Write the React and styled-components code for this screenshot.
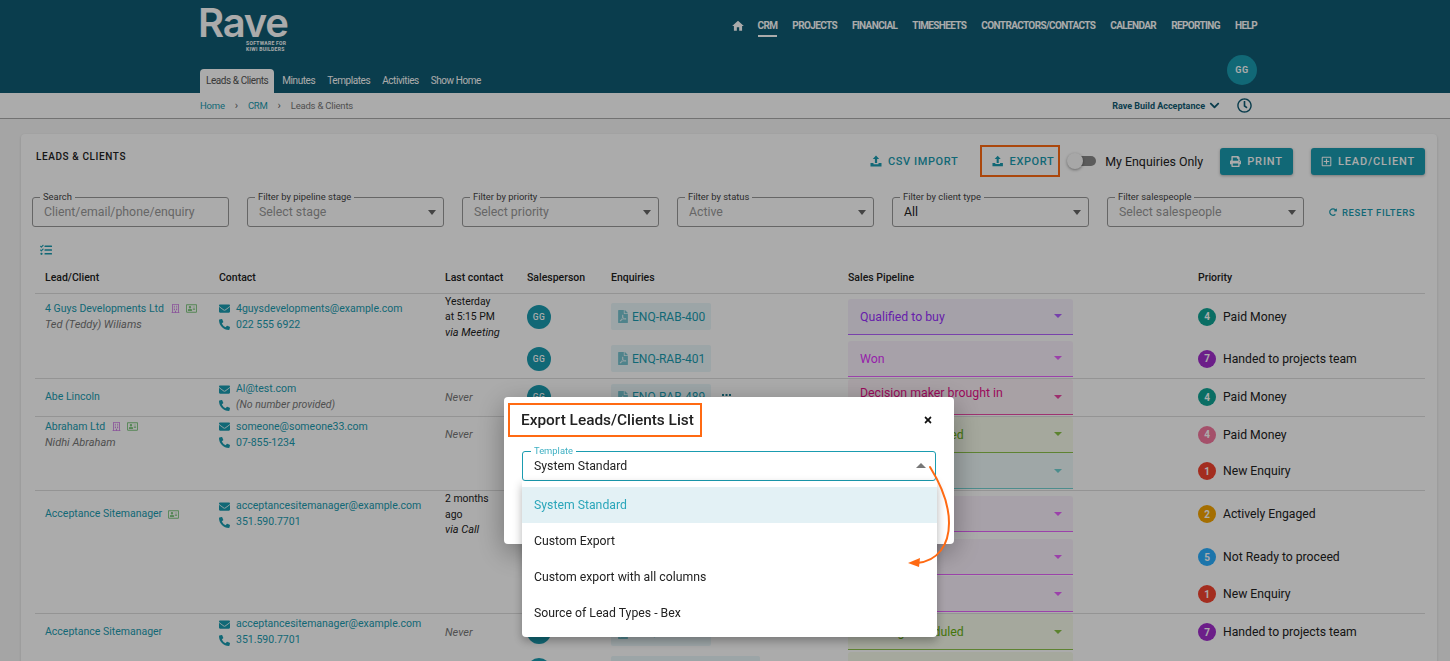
import React from "react";
import styled, { createGlobalStyle } from "styled-components";
import {
  FaChevronDown,
  FaEnvelope,
  FaFilePdf,
  FaPhoneAlt,
  FaPrint,
  FaRedoAlt,
  FaRegAddressCard,
  FaRegBuilding,
  FaRegClock,
  FaRegPlusSquare,
  FaTasks,
  FaTimes,
} from "react-icons/fa";
import { MdHome } from "react-icons/md";

const GlobalStyle = createGlobalStyle`
  html, body {
    margin: 0;
    height: 100%;
    overflow: hidden;
    background: #f7f7f7;
    font-family: Roboto, "Liberation Sans", sans-serif;
    font-size: 12px;
    color: #222;
  }
  * {
    box-sizing: border-box;
  }
`;

const TEAL = "#1a9cb0";

const navItems = ["CRM", "PROJECTS", "FINANCIAL", "TIMESHEETS", "CONTRACTORS/CONTACTS", "CALENDAR", "REPORTING", "HELP"];
const subItems = ["Leads & Clients", "Minutes", "Templates", "Activities", "Show Home"];
const filters = [
  { label: "Filter by pipeline stage", value: "Select stage" },
  { label: "Filter by priority", value: "Select priority" },
  { label: "Filter by status", value: "Active" },
  { label: "Filter by client type", value: "All", filled: true },
  { label: "Filter salespeople", value: "Select salespeople" },
];
const options = ["System Standard", "Custom Export", "Custom export with all columns", "Source of Lead Types - Bex"];

const stages = {
  qualified: { color: "#9a30ff", bg: "#f7f1fd" },
  won: { color: "#e030ff", bg: "#faf1fc" },
  decision: { color: "#e60f8a", bg: "#fbf0f6" },
  meeting: { color: "#66b010", bg: "#f6fbea" },
  fresh: { color: "#46c5c5", bg: "#eef9f9" },
};

const clients = [
  {
    name: "4 Guys Developments Ltd",
    person: "Ted (Teddy) Wiliams",
    building: true,
    card: true,
    email: "4guysdevelopments@example.com",
    phone: "022 555 6922",
    last: ["Yesterday", "at 5:15 PM"],
    via: "via Meeting",
    rows: [
      { enq: "ENQ-RAB-400", stage: "Qualified to buy", type: "qualified", n: 4, nc: "#10a495", pr: "Paid Money", h: 47 },
      { enq: "ENQ-RAB-401", stage: "Won", type: "won", n: 7, nc: "#a12dcd", pr: "Handed to projects team", h: 38 },
    ],
  },
  {
    name: "Abe Lincoln",
    email: "Al@test.com",
    noPhone: true,
    never: true,
    rows: [
      { enq: "ENQ-RAB-489", grip: true, stage: "Decision maker brought in", type: "decision", n: 4, nc: "#10a495", pr: "Paid Money", h: 38, top: true },
    ],
  },
  {
    name: "Abraham Ltd",
    person: "Nidhi Abraham",
    building: true,
    card: true,
    email: "someone@someone33.com",
    phone: "07-855-1234",
    never: true,
    rows: [
      { enq: "ENQ-RAB-402", stage: "Meeting scheduled", type: "meeting", n: 4, nc: "#f5789f", pr: "Paid Money", h: 37 },
      { enq: "ENQ-RAB-403", stage: "New", type: "fresh", n: 1, nc: "#f4432f", pr: "New Enquiry", h: 37 },
    ],
  },
  {
    name: "Acceptance Sitemanager",
    card: true,
    email: "acceptancesitemanager@example.com",
    phone: "351.590.7701",
    last: ["2 months", "ago"],
    via: "via Call",
    rows: [
      { enq: "ENQ-RAB-404", stage: "Won", type: "won", n: 2, nc: "#f5a400", pr: "Actively Engaged", h: 48 },
      { enq: "ENQ-RAB-405", stage: "Won", type: "won", n: 5, nc: "#2bafff", pr: "Not Ready to proceed", h: 38 },
      { enq: "ENQ-RAB-406", stage: "Won", type: "won", n: 1, nc: "#f4432f", pr: "New Enquiry", h: 37 },
    ],
  },
  {
    name: "Acceptance Sitemanager",
    email: "acceptancesitemanager@example.com",
    phone: "351.590.7701",
    never: true,
    rows: [
      { enq: "ENQ-RAB-407", stage: "Meeting scheduled", type: "meeting", n: 7, nc: "#a12dcd", pr: "Handed to projects team", h: 38 },
      { enq: "ENQ-RAB-408-LONGER", stage: "Meeting scheduled", type: "meeting", n: 7, nc: "#a12dcd", pr: "Handed to projects team", h: 38 },
    ],
  },
];

const UploadIcon = () => (
  <svg width="12" height="12" viewBox="0 0 12 12" fill="currentColor">
    <path d="M6 0.5 9.2 4H7.1v4H4.9V4H2.8z" />
    <path d="M0.5 8h3v1.2h5V8h3v3.5H0.5z" />
  </svg>
);

const GripIcon = () => (
  <svg width="9" height="6" viewBox="0 0 9 6" fill="currentColor">
    <rect x="0" y="0" width="2" height="2" />
    <rect x="3.5" y="0" width="2" height="2" />
    <rect x="7" y="0" width="2" height="2" />
    <rect x="0" y="3.5" width="2" height="2" />
    <rect x="3.5" y="3.5" width="2" height="2" />
    <rect x="7" y="3.5" width="2" height="2" />
  </svg>
);

function Client({ client }) {
  const count = client.rows.length;
  return client.rows.map((row, i) => (
    <Row key={row.enq} $h={row.h} $end={i === count - 1}>
      <Cell $first>
        {i === 0 && (
          <>
            <NameLine>
              <ClientName>{client.name}</ClientName>
              {client.building && <BuildingIcon />}
              {client.card && <CardIcon />}
            </NameLine>
            {client.person && <Person>{client.person}</Person>}
          </>
        )}
      </Cell>
      <Cell>
        {i === 0 && (
          <>
            <ContactLine>
              <FaEnvelope />
              {client.email}
            </ContactLine>
            <ContactLine>
              <FaPhoneAlt />
              {client.noPhone ? <NoNumber>(No number provided)</NoNumber> : client.phone}
            </ContactLine>
          </>
        )}
      </Cell>
      <Cell>
        {i === 0 &&
          (client.never ? (
            <Never>Never</Never>
          ) : (
            <>
              {client.last.map((t) => (
                <LastLine key={t}>{t}</LastLine>
              ))}
              <Via>{client.via}</Via>
            </>
          ))}
      </Cell>
      <Cell>
        <Avatar>GG</Avatar>
      </Cell>
      <Cell>
        <EnquiryWrap>
          <Chip>
            <FaFilePdf />
            {row.enq}
          </Chip>
          {row.grip && (
            <Grip>
              <GripIcon />
            </Grip>
          )}
        </EnquiryWrap>
      </Cell>
      <Cell>
        <Stage $color={stages[row.type].color} $bg={stages[row.type].bg} $top={row.top}>
          <StageText>{row.stage}</StageText>
          <Caret $color={stages[row.type].color} />
        </Stage>
      </Cell>
      <Cell>
        <PriorityLine>
          <PriorityBadge $color={row.nc}>{row.n}</PriorityBadge>
          {row.pr}
        </PriorityLine>
      </Cell>
    </Row>
  ));
}

export default function App() {
  return (
    <>
      <GlobalStyle />
      <Header>
        <HeaderInner>
          <TopBar>
            <Logo>
              <LogoWord>Rave</LogoWord>
              <LogoTag>
                SOFTWARE FOR
                <br />
                KIWI BUILDERS
              </LogoTag>
            </Logo>
            <MainNav>
              <HomeLink>
                <MdHome />
              </HomeLink>
              {navItems.map((item) => (
                <NavLink key={item} $active={item === "CRM"}>
                  {item}
                </NavLink>
              ))}
            </MainNav>
          </TopBar>
          <BottomBar>
            <SubNav>
              {subItems.map((item, i) => (
                <SubTab key={item} $active={i === 0}>
                  {item}
                </SubTab>
              ))}
            </SubNav>
            <UserAvatar>GG</UserAvatar>
          </BottomBar>
        </HeaderInner>
      </Header>

      <CrumbBar>
        <Crumbs>
          <CrumbLink>Home</CrumbLink>
          <CrumbSep>›</CrumbSep>
          <CrumbLink>CRM</CrumbLink>
          <CrumbSep>›</CrumbSep>
          <CrumbCurrent>Leads &amp; Clients</CrumbCurrent>
        </Crumbs>
        <CompanyPicker>
          Rave Build Acceptance
          <FaChevronDown />
        </CompanyPicker>
        <ClockLink>
          <FaRegClock />
        </ClockLink>
      </CrumbBar>

      <Page>
        <Card>
          <CardHead>
            <CardTitle>LEADS &amp; CLIENTS</CardTitle>
            <Actions>
              <TextButton>
                <UploadIcon />
                CSV IMPORT
              </TextButton>
              <ExportButton>
                <UploadIcon />
                EXPORT
              </ExportButton>
              <ToggleWrap>
                <Track>
                  <Thumb />
                </Track>
                My Enquiries Only
              </ToggleWrap>
              <SolidButton>
                <FaPrint />
                PRINT
              </SolidButton>
              <SolidButton>
                <FaRegPlusSquare />
                LEAD/CLIENT
              </SolidButton>
            </Actions>
          </CardHead>

          <FilterRow>
            <Field>
              <Legend>Search</Legend>
              <Placeholder>Client/email/phone/enquiry</Placeholder>
            </Field>
            {filters.map((f) => (
              <Field key={f.label}>
                <Legend>{f.label}</Legend>
                {f.filled ? <FieldValue>{f.value}</FieldValue> : <Placeholder>{f.value}</Placeholder>}
                <FieldCaret />
              </Field>
            ))}
            <ResetButton>
              <FaRedoAlt />
              RESET FILTERS
            </ResetButton>
          </FilterRow>

          <ListToggle>
            <FaTasks />
          </ListToggle>

          <Table>
            <colgroup>
              <col style={{ width: 184 }} />
              <col style={{ width: 226 }} />
              <col style={{ width: 82 }} />
              <col style={{ width: 84 }} />
              <col style={{ width: 237 }} />
              <col style={{ width: 350 }} />
              <col />
            </colgroup>
            <thead>
              <tr>
                <HeadCell $first>Lead/Client</HeadCell>
                <HeadCell>Contact</HeadCell>
                <HeadCell>Last contact</HeadCell>
                <HeadCell>Salesperson</HeadCell>
                <HeadCell>Enquiries</HeadCell>
                <HeadCell>Sales Pipeline</HeadCell>
                <HeadCell>Priority</HeadCell>
              </tr>
            </thead>
            <tbody>
              {clients.map((c) => (
                <Client key={c.email + c.rows[0].enq} client={c} />
              ))}
            </tbody>
          </Table>
        </Card>
      </Page>

      <Backdrop>
        <Modal>
          <ModalHead>
            <ModalTitle>Export Leads/Clients List</ModalTitle>
            <CloseButton>
              <FaTimes />
            </CloseButton>
          </ModalHead>
          <SelectField>
            <SelectLegend>Template</SelectLegend>
            <FieldValue>System Standard</FieldValue>
            <UpCaret />
          </SelectField>
          <Menu>
            {options.map((o, i) => (
              <MenuItem key={o} $selected={i === 0}>
                {o}
              </MenuItem>
            ))}
          </Menu>
          <Arrow width="60" height="120" viewBox="0 0 60 120" fill="none">
            <path d="M22 2C32 18 41 38 41 58C41 80 30 96 9 98" stroke="#ff6a13" strokeWidth="2" strokeLinecap="round" />
            <path d="M0 98 12 93 11 102Z" fill="#ff6a13" />
          </Arrow>
        </Modal>
      </Backdrop>
    </>
  );
}

const Header = styled.header`
  background: #105b73;
  height: 93px;
  padding-left: 200px;
  padding-right: 193px;
`;
const HeaderInner = styled.div`
  display: flex;
  flex-direction: column;
  height: 100%;
`;
const TopBar = styled.div`
  display: flex;
  justify-content: space-between;
  height: 69px;
`;
const Logo = styled.div`
  width: 96px;
  padding-top: 5px;
  color: #fff;
`;
const LogoWord = styled.div`
  font-family: Inter, "Liberation Sans", sans-serif;
  font-size: 40px;
  font-weight: 600;
  line-height: 36px;
  letter-spacing: -1.2px;
  margin-left: -2px;
`;
const LogoTag = styled.div`
  font-size: 5px;
  font-weight: 700;
  line-height: 6px;
  letter-spacing: 0.3px;
  margin-top: -1px;
  padding-left: 46px;
  white-space: nowrap;
`;
const MainNav = styled.nav`
  display: flex;
  align-items: flex-start;
  gap: 15px;
  padding-top: 19px;
`;
const HomeLink = styled.a`
  color: #fff;
  font-size: 14px;
  line-height: 13px;
  margin-right: -2px;
`;
const NavLink = styled.a`
  color: #fff;
  font-size: 10px;
  font-weight: 700;
  letter-spacing: -0.63px;
  line-height: 13px;
  padding-bottom: 3px;
  border-bottom: 2px solid ${(p) => (p.$active ? "#fff" : "transparent")};
`;
const BottomBar = styled.div`
  display: flex;
  justify-content: space-between;
  align-items: flex-end;
  flex: 1;
`;
const SubNav = styled.div`
  display: flex;
  align-items: flex-end;
  gap: 12px;
`;
const SubTab = styled.a`
  height: 24px;
  line-height: 24px;
  font-size: 10px;
  letter-spacing: -0.43px;
  color: ${(p) => (p.$active ? "#555" : "#fff")};
  background: ${(p) => (p.$active ? "#fff" : "transparent")};
  padding: ${(p) => (p.$active ? "0 6px" : "0")};
  margin-right: ${(p) => (p.$active ? "-4px" : "0")};
  border-radius: 4px 4px 0 0;
`;
const UserAvatar = styled.div`
  width: 30px;
  height: 30px;
  border-radius: 50%;
  background: #1a9cb0;
  color: #fff;
  font-size: 9px;
  font-weight: 700;
  letter-spacing: 0.5px;
  display: flex;
  align-items: center;
  justify-content: center;
  margin-bottom: 8px;
`;

const CrumbBar = styled.div`
  height: 26px;
  background: #fff;
  border-bottom: 1px solid #aaa;
  display: flex;
  align-items: center;
  padding-left: 200px;
  padding-right: 198px;
`;
const Crumbs = styled.div`
  display: flex;
  align-items: center;
  gap: 10px;
  font-size: 9.5px;
  letter-spacing: -0.2px;
  flex: 1;
`;
const CrumbLink = styled.a`
  color: ${TEAL};
`;
const CrumbSep = styled.span`
  color: #666;
  font-size: 11px;
`;
const CrumbCurrent = styled.span`
  color: #777;
`;
const CompanyPicker = styled.div`
  display: flex;
  align-items: center;
  gap: 4px;
  font-size: 9px;
  font-weight: 700;
  color: #105b73;
  svg {
    font-size: 11px;
  }
`;
const ClockLink = styled.a`
  color: #105b73;
  font-size: 15px;
  line-height: 15px;
  margin-left: 17px;
  display: flex;
`;

const Page = styled.main`
  padding: 15px 13px 0 21px;
`;
const Card = styled.section`
  background: #fff;
  border-radius: 4px;
  padding: 13px 12px 0 14px;
  box-shadow: 0 1px 3px rgba(0, 0, 0, 0.15);
`;
const CardHead = styled.div`
  display: flex;
  justify-content: space-between;
  align-items: flex-start;
  height: 50px;
`;
const CardTitle = styled.h1`
  margin: 3px 0 0 1px;
  font-size: 10px;
  font-weight: 500;
  letter-spacing: 0.6px;
  line-height: 13px;
  color: #222;
`;
const Actions = styled.div`
  display: flex;
  align-items: center;
  height: 32px;
  margin-top: -2px;
`;
const TextButton = styled.button`
  display: flex;
  align-items: center;
  gap: 6px;
  border: 0;
  background: none;
  color: ${TEAL};
  font-family: inherit;
  font-size: 11px;
  font-weight: 500;
  letter-spacing: 0.6px;
  padding: 0 8px 0 6px;
  height: 32px;
  margin-right: 14px;
`;
const ExportButton = styled(TextButton)`
  border: 2px solid #ff6a13;
  margin-right: 0;
  width: 80px;
  padding: 0 4px 0 10px;
`;
const ToggleWrap = styled.label`
  display: flex;
  align-items: center;
  gap: 9px;
  font-size: 12.4px;
  color: #222;
  margin-left: 8px;
  margin-right: -1px;
`;
const Track = styled.span`
  width: 28px;
  height: 10px;
  background: #888;
  border-radius: 5px;
  position: relative;
  display: block;
`;
const Thumb = styled.span`
  position: absolute;
  left: -1px;
  top: -3px;
  width: 16px;
  height: 16px;
  border-radius: 50%;
  background: #fafafa;
  box-shadow: 0 1px 3px rgba(0, 0, 0, 0.4);
`;
const SolidButton = styled.button`
  display: flex;
  align-items: center;
  gap: 6px;
  height: 27px;
  border: 0;
  border-radius: 3px;
  background: ${TEAL};
  color: #fff;
  font-family: inherit;
  font-size: 11px;
  font-weight: 500;
  letter-spacing: 0.85px;
  padding: 0 10px;
  margin-left: 18px;
  box-shadow: 0 1px 3px rgba(0, 0, 0, 0.3);
`;

const FilterRow = styled.div`
  display: flex;
  align-items: center;
  gap: 18px;
  margin-left: -3px;
`;
const Field = styled.div`
  position: relative;
  flex: 0 0 197px;
  height: 30px;
  border: 1px solid #999;
  border-radius: 3px;
  padding: 0 11px;
  display: flex;
  align-items: center;
`;
const Legend = styled.span`
  position: absolute;
  top: -7px;
  left: 7px;
  padding: 0 3px;
  background: #fff;
  font-size: 9.4px;
  line-height: 11px;
  color: #444;
  white-space: nowrap;
`;
const Placeholder = styled.span`
  font-size: 12.3px;
  color: #999;
  white-space: nowrap;
`;
const FieldValue = styled.span`
  font-size: 12.3px;
  color: #222;
  white-space: nowrap;
`;
const FieldCaret = styled.span`
  position: absolute;
  right: 7px;
  top: 12px;
  border-left: 4.5px solid transparent;
  border-right: 4.5px solid transparent;
  border-top: 5px solid #666;
`;
const ResetButton = styled.button`
  display: flex;
  align-items: center;
  gap: 5px;
  border: 0;
  background: none;
  color: ${TEAL};
  font-family: inherit;
  font-size: 9.5px;
  font-weight: 500;
  letter-spacing: 0.6px;
  padding: 0;
  margin-left: 7px;
  white-space: nowrap;
  svg {
    font-size: 8px;
  }
`;
const ListToggle = styled.div`
  color: ${TEAL};
  font-size: 12px;
  line-height: 12px;
  height: 12px;
  margin: 17px 0 0 5px;
  display: flex;
`;

const Table = styled.table`
  width: 100%;
  table-layout: fixed;
  border-collapse: collapse;
  margin-top: 6px;
`;
const HeadCell = styled.th`
  text-align: left;
  font-size: 10.5px;
  font-weight: 500;
  height: 31px;
  padding: 0 0 0 ${(p) => (p.$first ? "10px" : "0")};
  color: #222;
  border-bottom: 1px solid #ddd;
`;
const Row = styled.tr`
  height: ${(p) => p.$h}px;
  border-bottom: ${(p) => (p.$end ? "1px solid #ddd" : "0")};
`;
const Cell = styled.td`
  padding: 0 0 0 ${(p) => (p.$first ? "10px" : "0")};
  vertical-align: middle;
  font-size: 11px;
`;
const NameLine = styled.div`
  display: flex;
  align-items: center;
  gap: 6px;
  line-height: 16px;
`;
const ClientName = styled.a`
  color: ${TEAL};
  font-size: 10.5px;
`;
const BuildingIcon = styled(FaRegBuilding)`
  color: #d080e8;
  font-size: 9px;
  margin-left: 1px;
`;
const CardIcon = styled(FaRegAddressCard)`
  color: #7fc87f;
  font-size: 11px;
`;
const Person = styled.div`
  font-style: italic;
  color: #777;
  font-size: 11px;
  line-height: 16px;
`;
const ContactLine = styled.div`
  display: flex;
  align-items: center;
  gap: 6px;
  color: ${TEAL};
  font-size: 10.5px;
  line-height: 16px;
  white-space: nowrap;
  svg {
    font-size: 11px;
    width: 11px;
  }
`;
const NoNumber = styled.span`
  font-style: italic;
  color: #777;
`;
const Never = styled.span`
  font-style: italic;
  color: #777;
`;
const LastLine = styled.div`
  font-size: 10.4px;
  line-height: 15.5px;
`;
const Via = styled.div`
  font-style: italic;
  font-size: 11px;
  line-height: 15.5px;
`;
const Avatar = styled.div`
  width: 24px;
  height: 24px;
  border-radius: 50%;
  background: ${TEAL};
  color: #fff;
  font-size: 8.5px;
  font-weight: 500;
  letter-spacing: 0.5px;
  display: flex;
  align-items: center;
  justify-content: center;
`;
const EnquiryWrap = styled.div`
  display: flex;
  align-items: center;
  gap: 11px;
`;
const Chip = styled.a`
  display: inline-flex;
  align-items: center;
  gap: 4px;
  height: 27px;
  padding: 0 6px 0 7px;
  border-radius: 2px;
  background: #e9f6f9;
  color: ${TEAL};
  font-size: 12px;
  white-space: nowrap;
  svg {
    font-size: 13px;
    width: 10px;
    opacity: 0.55;
  }
`;
const Grip = styled.span`
  color: #1a7c90;
  display: flex;
`;
const Stage = styled.div`
  position: relative;
  height: 36px;
  width: 225px;
  background: ${(p) => p.$bg};
  border-bottom: 1px solid ${(p) => p.$color}bb;
  border-radius: 3px 3px 0 0;
  color: ${(p) => p.$color};
  font-size: 12.3px;
  display: flex;
  align-items: ${(p) => (p.$top ? "flex-start" : "center")};
  padding: ${(p) => (p.$top ? "5px" : "1px")} 36px 0 12px;
  overflow: hidden;
`;
const StageText = styled.span`
  line-height: 18px;
`;
const Caret = styled.span`
  position: absolute;
  right: 11px;
  top: 50%;
  margin-top: -2px;
  border-left: 4px solid transparent;
  border-right: 4px solid transparent;
  border-top: 4.5px solid ${(p) => p.$color};
  opacity: 0.75;
`;
const PriorityLine = styled.div`
  display: flex;
  align-items: center;
  gap: 7px;
  font-size: 12.2px;
`;
const PriorityBadge = styled.span`
  width: 18px;
  height: 18px;
  border-radius: 50%;
  background: ${(p) => p.$color};
  color: #fff;
  font-size: 10px;
  font-weight: 700;
  display: flex;
  align-items: center;
  justify-content: center;
`;

const Backdrop = styled.div`
  position: fixed;
  inset: 0;
  background: rgba(0, 0, 0, 0.33);
  padding: 397px 0 0 504px;
`;
const Modal = styled.div`
  position: relative;
  width: 450px;
  height: 147px;
  background: #fff;
  border-radius: 4px;
  box-shadow: 0 8px 28px rgba(0, 0, 0, 0.35);
  padding: 6px 18px 0 4px;
`;
const ModalHead = styled.div`
  display: flex;
  align-items: center;
  justify-content: space-between;
`;
const ModalTitle = styled.h2`
  margin: 0;
  height: 34px;
  width: 194px;
  border: 2px solid #ff6a13;
  font-size: 15.4px;
  font-weight: 500;
  line-height: 31px;
  padding-left: 11px;
  color: #222;
  white-space: nowrap;
`;
const CloseButton = styled.button`
  border: 0;
  background: none;
  padding: 0;
  font-size: 10px;
  color: #111;
  margin-right: 3px;
  display: flex;
`;
const SelectField = styled.div`
  position: relative;
  margin: 14px 0 0 14px;
  height: 30px;
  border: 1px solid ${TEAL};
  border-radius: 3px;
  display: flex;
  align-items: center;
  padding-left: 11px;
`;
const SelectLegend = styled(Legend)`
  left: 8px;
  color: #3fb0c3;
`;
const UpCaret = styled.span`
  position: absolute;
  right: 9px;
  top: 11px;
  border-left: 5px solid transparent;
  border-right: 5px solid transparent;
  border-bottom: 5px solid #777;
`;
const Menu = styled.ul`
  position: absolute;
  left: 18px;
  top: 84px;
  width: 415px;
  margin: 0;
  padding: 6px 0;
  list-style: none;
  background: #fff;
  border-radius: 0 0 4px 4px;
  box-shadow: 0 4px 10px rgba(0, 0, 0, 0.3);
`;
const MenuItem = styled.li`
  height: 36px;
  line-height: 36px;
  padding-left: 12px;
  font-size: 12.25px;
  color: ${(p) => (p.$selected ? "#2ba6ba" : "#222")};
  background: ${(p) => (p.$selected ? "#e3f1f5" : "transparent")};
`;
const Arrow = styled.svg`
  position: absolute;
  left: 404px;
  top: 68px;
`;
